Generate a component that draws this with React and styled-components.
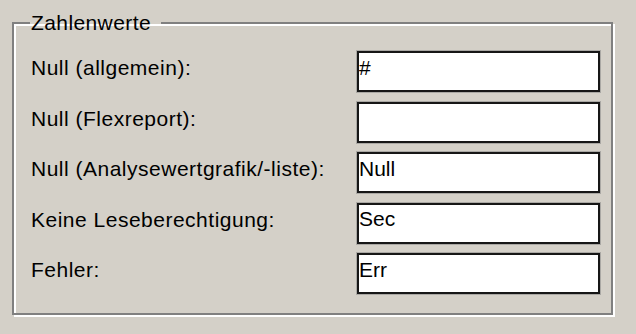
import { Fragment } from "react";
import styled, { createGlobalStyle } from "styled-components";

const GlobalStyle = createGlobalStyle`
  html, body {
    margin: 0;
    padding: 0;
    background: #d4d0c8;
  }
  body {
    font-family: "Liberation Sans", Arial, sans-serif;
    color: #000;
  }
`;

const Page = styled.div`
  width: 636px;
  height: 334px;
  box-sizing: border-box;
  padding: 11px 0 0 12px;
  background: #d4d0c8;
`;

const Group = styled.fieldset`
  box-sizing: border-box;
  width: 601px;
  margin: 0;
  padding: 16px 11px 19px 17px;
  border: 2px solid #808080;
  box-shadow: inset 2px 2px 0 #fff, 2px 2px 0 #fff;
  min-inline-size: 0;
`;

const Legend = styled.legend`
  margin-left: -1px;
  padding: 0 10px 0 1px;
  font-size: 21px;
  line-height: 24px;
  letter-spacing: 0.4px;
`;

const Grid = styled.div`
  display: grid;
  grid-template-columns: 326px 243px;
  row-gap: 9.5px;
  align-items: start;
`;

const Label = styled.label`
  padding-top: 5px;
  font-size: 21px;
  line-height: 24px;
  letter-spacing: 0.5px;
  white-space: nowrap;
`;

const Field = styled.input`
  box-sizing: border-box;
  width: 243px;
  height: 41px;
  margin: 0;
  padding: 2px 0 10px 0;
  border: 2px solid #161616;
  box-shadow: 0 0 0 1px rgba(120, 120, 120, 0.45);
  background: #fff;
  font-family: "Liberation Sans", Arial, sans-serif;
  font-size: 21px;
  line-height: 24px;
  color: #000;
  outline: none;
`;

const rows = [
  { label: "Null (allgemein):", value: "#" },
  { label: "Null (Flexreport):", value: "" },
  { label: "Null (Analysewertgrafik/-liste):", value: "Null" },
  { label: "Keine Leseberechtigung:", value: "Sec" },
  { label: "Fehler:", value: "Err" },
];

const App = () => {
  return (
    <Page>
      <GlobalStyle />
      <Group>
        <Legend>Zahlenwerte</Legend>
        <Grid>
          {rows.map((row, i) => (
            <Fragment key={i}>
              <Label htmlFor={"f" + i}>{row.label}</Label>
              <Field id={"f" + i} readOnly defaultValue={row.value} />
            </Fragment>
          ))}
        </Grid>
      </Group>
    </Page>
  );
};

export default App;
